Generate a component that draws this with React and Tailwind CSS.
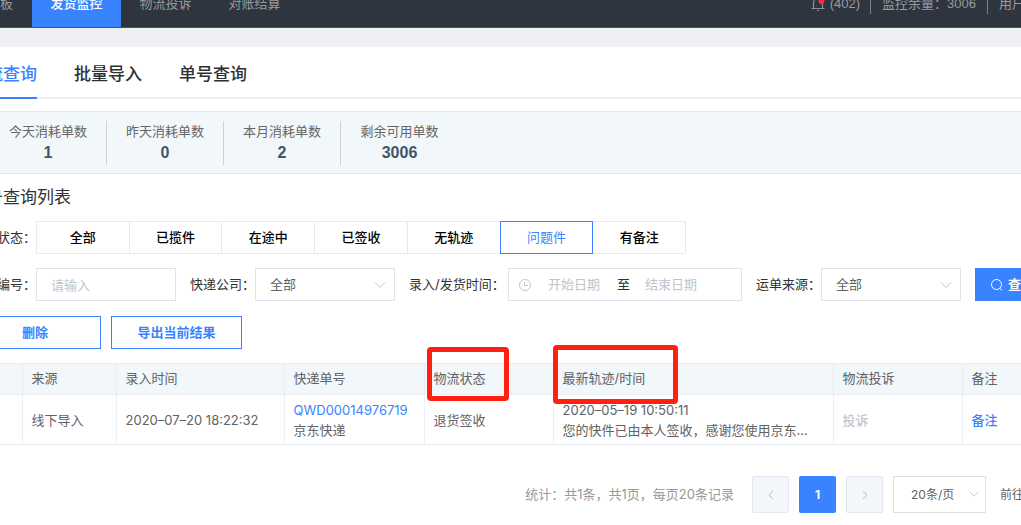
import React, { useState } from 'react';
import clsx from 'clsx';

const navItems = ['发货监控', '物流投诉', '对账结算'];

const stats = [
    { label: '今天消耗单数', value: 1 },
    { label: '昨天消耗单数', value: 0 },
    { label: '本月消耗单数', value: 2 },
    { label: '剩余可用单数', value: 3006 },
];

const statuses = ['全部', '已揽件', '在途中', '已签收', '无轨迹', '问题件', '有备注'];

const ChevronDown = ({ className }) => (
    <svg className={className} width="12" height="12" viewBox="0 0 12 12" fill="none" stroke="#c0c4cc" strokeWidth="1">
        <path d="M1 3.5l5 5 5-5" />
    </svg>
);

const BellIcon = () => (
    <svg width="14" height="18" viewBox="0 0 14 18" fill="none">
        <path d="M0.5 13.5h13M2.5 13.5V8a4.5 4.5 0 0 1 9 0v5.5M6 15.5h2" stroke="#8b8e93" strokeWidth="1.2" />
        <circle cx="10.5" cy="6" r="3" fill="#ff2d3d" />
    </svg>
);

const SelectBox = ({ id, label, option }) => (
    <div className="flex shrink-0 items-center">
        <label htmlFor={id} className="w-[65px] whitespace-nowrap">{label}</label>
        <div className="relative w-[140px]">
            <select id={id} className="block h-[33px] w-full appearance-none border border-[#e1e3ec] bg-white px-[14px] text-[13px] text-[#606266]">
                <option>{option}</option>
            </select>
            <ChevronDown className="pointer-events-none absolute right-[9px] top-[11px]" />
        </div>
    </div>
);

const Header = () => (
    <header className="flex h-7 items-end overflow-hidden border-b border-[#4a5057] bg-[#2e353f] font-['Liberation_Sans','Noto_Sans_CJK_SC',sans-serif] text-[13px] text-[#999b9f]">
        <nav className="flex">
            <a href="#board" className="flex h-[46px] w-8 items-center">板</a>
            {navItems.map((item, i) => (
                <a
                    key={item}
                    href={`#nav-${i}`}
                    className={clsx('flex h-[46px] w-[89px] items-center justify-center', i === 0 && 'bg-[#3a83ff] font-medium text-white')}
                >
                    {item}
                </a>
            ))}
        </nav>
        <div className="ml-auto flex h-[46px] items-center">
            <BellIcon />
            <span className="ml-[5px]">(402)</span>
            <span className="ml-[10px] h-5 w-px bg-[#7d8187]" />
            <span className="ml-[11px]">监控余量：3006</span>
            <span className="ml-[11px] h-5 w-px bg-[#7d8187]" />
            <span className="ml-[11px] w-[22px] overflow-hidden whitespace-nowrap">用户</span>
        </div>
    </header>
);

const Tabs = () => (
    <div className="flex h-[52px] gap-[37px] border-b-2 border-[#eeeff5] text-[17px] font-medium text-[#303133]">
        <button className="-mb-[2px] w-[68px] border-b-2 border-[#3a83ff] pt-1.5 text-right text-[#3a83ff]">流查询</button>
        <button className="pt-1.5">批量导入</button>
        <button className="pt-1.5">单号查询</button>
    </div>
);

const StatsBar = () => (
    <div className="flex h-[63px] items-center border-y border-[#dfe6f0] bg-[#f2f7fa] pl-[21px]">
        {stats.map((s) => (
            <div key={s.label} className="w-[117px] border-r border-[#cdd1d6] text-center last:border-r-0">
                <div className="text-[13px] leading-[20px] text-[#666]">{s.label}</div>
                <div className="font-['Liberation_Sans'] text-[16px] font-bold leading-[24px] text-[#40566c]">{s.value}</div>
            </div>
        ))}
    </div>
);

const Filters = () => {
    const [active, setActive] = useState('问题件');

    return (
        <div className="flex flex-col gap-[14px] text-[#303133]">
            <div className="flex items-center">
                <span className="w-[67px] shrink-0 text-right">状态：</span>
                <div className="grid h-[33px] w-[649px] shrink-0 grid-cols-7">
                    {statuses.map((s) => (
                        <button
                            key={s}
                            onClick={() => setActive(s)}
                            className={clsx(
                                '-mr-px border',
                                s === active ? 'relative border-[#3a83ff] text-[#3a83ff]' : 'border-[#e8eaf2] font-medium text-black'
                            )}
                        >
                            {s}
                        </button>
                    ))}
                </div>
            </div>

            <div className="flex items-center gap-[14px]">
                <div className="flex shrink-0 items-center">
                    <label htmlFor="orderNo" className="w-[67px] text-right">编号：</label>
                    <input
                        id="orderNo"
                        placeholder="请输入"
                        className="h-[33px] w-[140px] border border-[#e1e3ec] px-[14px] placeholder:text-[#c0c4cc]"
                    />
                </div>
                <SelectBox id="company" label="快递公司：" option="全部" />
                <div className="flex shrink-0 items-center">
                    <label htmlFor="startDate" className="w-[99px] whitespace-nowrap">录入/发货时间：</label>
                    <div className="flex h-[33px] w-[234px] items-center border border-[#e1e3ec] pl-[10px]">
                        <svg width="12" height="12" viewBox="0 0 12 12" fill="none" stroke="#c0c4cc">
                            <circle cx="6" cy="6" r="5.5" />
                            <path d="M5.5 3v3.5H9" />
                        </svg>
                        <input id="startDate" placeholder="开始日期" className="w-[86px] text-center placeholder:text-[#c0c4cc]" />
                        <span>至</span>
                        <input aria-label="结束日期" placeholder="结束日期" className="w-[82px] text-center placeholder:text-[#c0c4cc]" />
                    </div>
                </div>
                <SelectBox id="source" label="运单来源：" option="全部" />
                <button className="flex h-[33px] shrink-0 items-center gap-[5px] bg-[#3a83ff] px-4 font-bold text-white">
                    <svg width="12" height="12" viewBox="0 0 12 12" fill="none" stroke="#fff">
                        <circle cx="5.5" cy="5.5" r="5" />
                        <path d="M8.5 9l2.5 2.5" />
                    </svg>
                    查询
                </button>
            </div>

            <div className="flex gap-[10px] pt-px font-bold text-[#3a83ff]">
                <button className="h-[33px] w-[132px] border border-[#3a83ff]">删除</button>
                <button className="h-[33px] w-[131px] border border-[#3a83ff]">导出当前结果</button>
            </div>
        </div>
    );
};

// red frame drawn round a column title
const Mark = ({ className }) => (
    <span className={clsx('pointer-events-none absolute z-10 rounded-[4px] border-[5px] border-[#ff2012]', className)} />
);

const OrderTable = () => (
    <table className="mt-[14px] w-full table-fixed border-collapse text-left text-[#606266]">
        <colgroup>
            <col className="w-[53px]" />
            <col className="w-[94px]" />
            <col className="w-[168px]" />
            <col className="w-[140px]" />
            <col className="w-[129px]" />
            <col className="w-[280px]" />
            <col className="w-[129px]" />
            <col />
        </colgroup>
        <thead>
            <tr className="h-[31px] border-y border-[#ebeef5] bg-[#f2f7fa] [&>th]:border-r [&>th]:border-[#e8ecf4] [&>th]:px-[9px] [&>th]:font-normal [&>th:last-child]:border-r-0">
                <th />
                <th>来源</th>
                <th>录入时间</th>
                <th>快递单号</th>
                <th className="relative">
                    物流状态
                    <Mark className="-top-[17px] left-[2px] h-[54px] w-[82px]" />
                </th>
                <th className="relative">
                    最新轨迹/时间
                    <Mark className="-left-px -top-[19px] h-[59px] w-[125px]" />
                </th>
                <th>物流投诉</th>
                <th>备注</th>
            </tr>
        </thead>
        <tbody>
            <tr className="h-[50px] border-b border-[#ebeef5] leading-[20px] [&>td]:border-r [&>td]:border-[#ebeef5] [&>td]:px-[9px] [&>td:last-child]:border-r-0">
                <td />
                <td>线下导入</td>
                <td>2020–07–20 18:22:32</td>
                <td>
                    <a href="#order" className="block text-[#3a83ff]">QWD00014976719</a>
                    京东快递
                </td>
                <td>退货签收</td>
                <td>
                    <div>2020–05–19 10:50:11</div>
                    <div className="whitespace-nowrap">您的快件已由本人签收，感谢您使用京东...</div>
                </td>
                <td className="font-medium text-[#c4c6ca]">投诉</td>
                <td><a href="#remark" className="font-medium text-[#3a83ff]">备注</a></td>
            </tr>
        </tbody>
    </table>
);

const Pagination = () => (
    <div className="mt-[31px] flex h-[37px] items-center justify-end text-[#606266]">
        <span className="mr-[18px] text-[#999]">统计：共1条，共1页，每页20条记录</span>
        <div className="flex gap-[10px]">
            <button aria-label="上一页" className="flex h-[37px] w-[37px] items-center justify-center rounded-[2px] border border-[#e1e8f2] bg-[#f3f7fa]">
                <svg width="10" height="10" viewBox="0 0 10 10" fill="none" stroke="#b4bac4"><path d="M7 1L3 5l4 4" /></svg>
            </button>
            <button className="h-[37px] w-[37px] rounded-[2px] bg-[#3a83ff] text-[12px] font-bold text-white">1</button>
            <button aria-label="下一页" className="flex h-[37px] w-[37px] items-center justify-center rounded-[2px] border border-[#e1e8f2] bg-[#f3f7fa]">
                <svg width="10" height="10" viewBox="0 0 10 10" fill="none" stroke="#b4bac4"><path d="M3 1l4 4-4 4" /></svg>
            </button>
            <div className="relative w-[93px]">
                <select aria-label="每页条数" className="block h-[37px] w-full appearance-none border border-[#dcdfe9] bg-white pl-[17px] text-[12px]">
                    <option>20条/页</option>
                </select>
                <ChevronDown className="pointer-events-none absolute right-[6px] top-[13px] h-[10px]" />
            </div>
        </div>
        <span className="ml-[14px] w-[21px] overflow-hidden whitespace-nowrap text-[12px]">前往</span>
    </div>
);

const App = () => (
    <div className="overflow-hidden bg-[#eef0f3] font-['Inter','Noto_Sans_CJK_SC',sans-serif] text-[13px]">
        <Header />
        <main className="-ml-[31px] mt-[19px] bg-white pb-3">
            <Tabs />
            <div className="mt-3">
                <StatsBar />
            </div>
            <h2 className="flex h-[47px] w-[102px] items-center justify-end text-[17px] text-[#303133]">号查询列表</h2>
            <Filters />
            <OrderTable />
            <Pagination />
        </main>
    </div>
);

export default App;
